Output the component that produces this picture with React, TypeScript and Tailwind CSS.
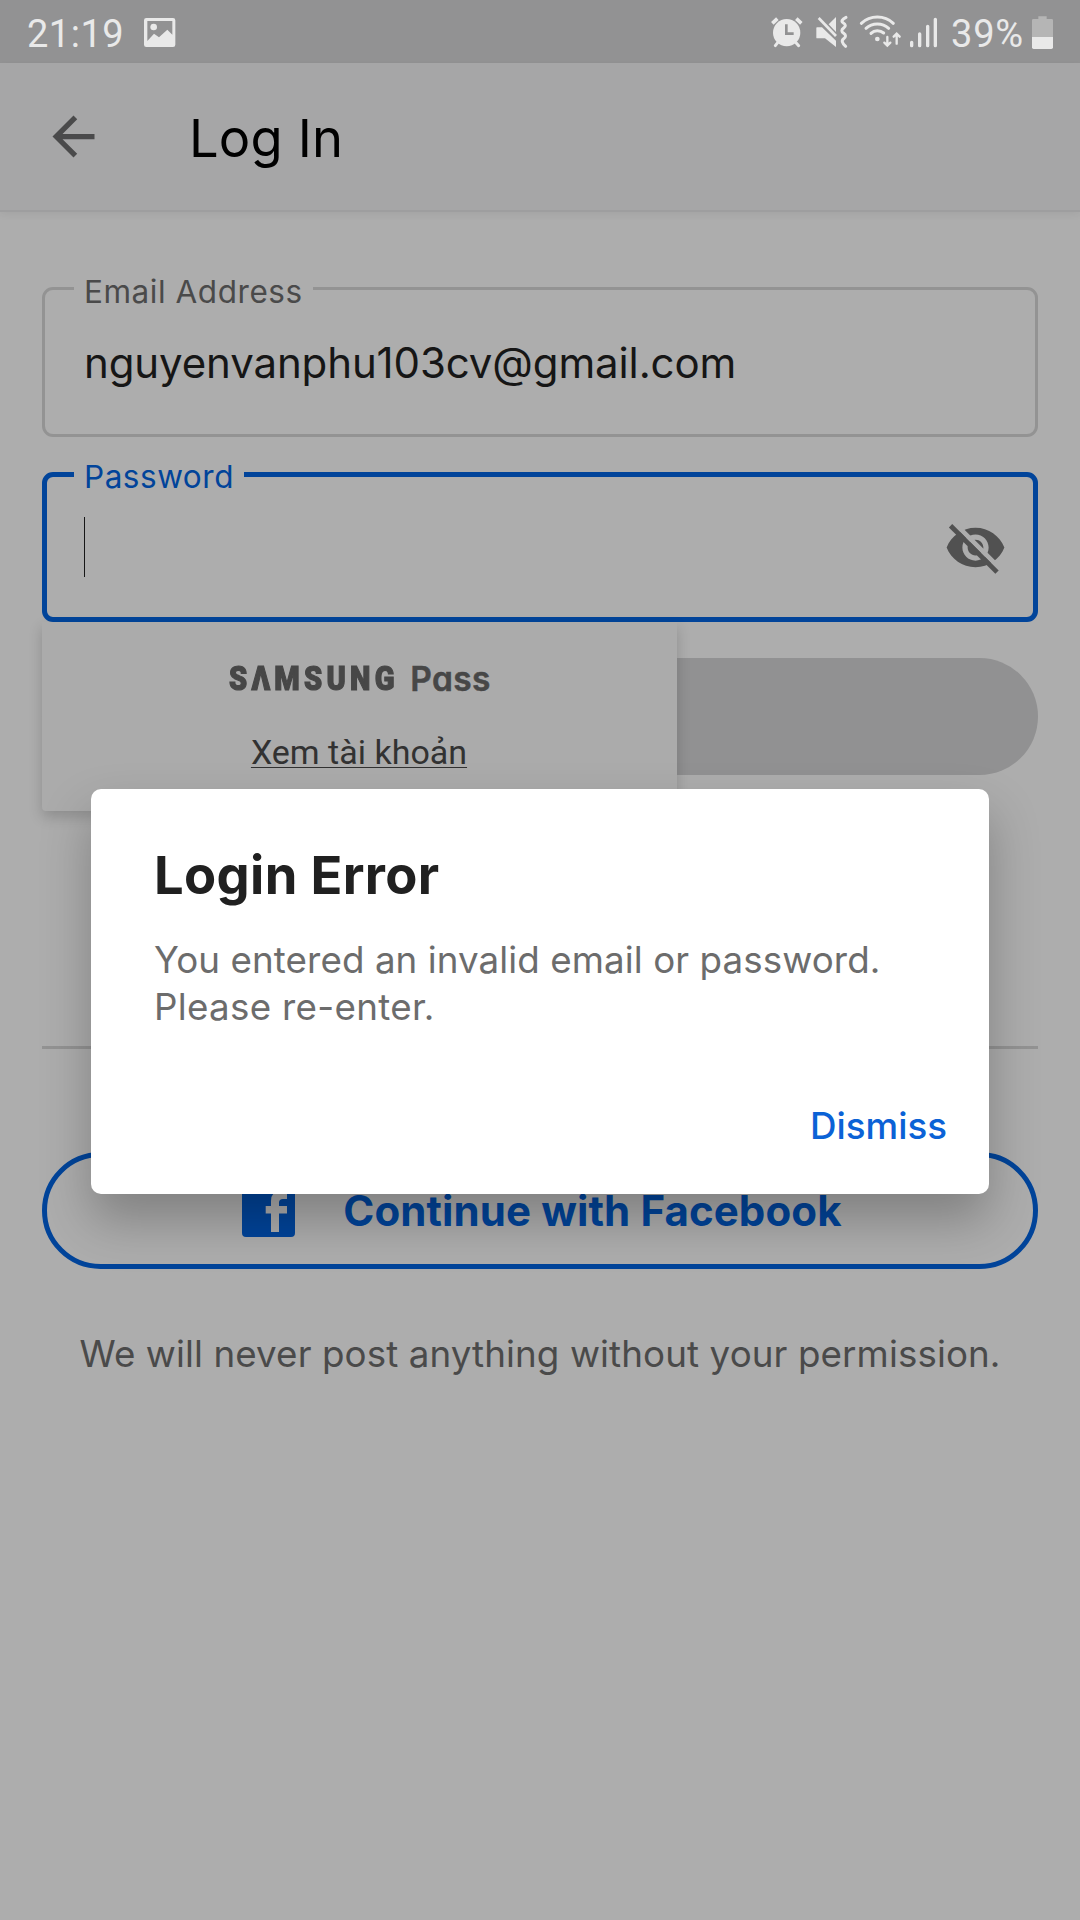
import React from "react";

function PictureIcon() {
  return (
    <svg width="34" height="31" viewBox="430 51 102 93" fill="#e9e9e9">
      <path
        fillRule="evenodd"
        d="M440 54H520Q527 54 527 61V134Q527 141 520 141H440Q433 141 433 134V61Q433 54 440 54ZM443 63V123L463 101L478 112L503 89L518 104V63Z"
      />
      <circle cx="462" cy="81" r="10" />
    </svg>
  );
}

function AlarmIcon() {
  return (
    <svg width="34" height="34" viewBox="90 45 102 102" fill="#e9e9e9" stroke="#e9e9e9" strokeLinecap="round">
      <circle cx="140" cy="98" r="41" stroke="none" />
      <path d="M97 70L112 56M184 70L169 56" strokeWidth="11" strokeLinecap="butt" />
      <path d="M113 128L106 137M168 128L176 137" strokeWidth="9" />
      <path d="M139 73V101H161" fill="none" stroke="#929293" strokeWidth="8" strokeLinecap="butt" />
    </svg>
  );
}

function MuteVibrateIcon() {
  return (
    <svg width="34" height="34" viewBox="225 45 102 102" fill="#e9e9e9">
      <path d="M231 82H246L288 122V141L255 115H231Q229 115 229 113V84Q229 82 231 82Z" />
      <path d="M288 51V96L266 73Z" />
      <path d="M236 54L288 108" stroke="#e9e9e9" strokeWidth="8" />
      <path
        d="M318 52Q300 61 309 68Q322 76 311 84Q300 92 311 100Q322 108 311 116Q300 124 317 139"
        fill="none"
        stroke="#e9e9e9"
        strokeWidth="9"
        strokeLinecap="round"
      />
    </svg>
  );
}

function WifiIcon() {
  return (
    <svg width="43" height="34" viewBox="357 45 129 102" fill="none" stroke="#e9e9e9" strokeWidth="9" strokeLinecap="round">
      <path d="M364 70Q384 51 412 51Q440 51 460 70" />
      <path d="M378 85Q392 72 412 72Q432 72 446 85" />
      <path d="M393 100Q401 92 412 92Q423 92 431 99" />
      <circle cx="412" cy="117" r="7" fill="#e9e9e9" stroke="none" />
      <path d="M442 111V135M433 128L442 137L451 128M470 131V103M461 110L470 101L479 110" strokeWidth="7" />
    </svg>
  );
}

function SignalIcon() {
  return (
    <svg width="30" height="34" viewBox="507 45 90 102" fill="none" stroke="#e9e9e9" strokeWidth="10" strokeLinecap="round">
      <path d="M515 127V137M539 102V137M563 79V137M586 58V137" />
    </svg>
  );
}

function BatteryIcon() {
  return (
    <svg width="23" height="35" viewBox="873 45 69 105">
      <path d="M895 49H920V57H935Q939 57 939 61V111H876V61Q876 57 880 57H895Z" fill="#b5b5b5" />
      <path d="M876 111H939V142Q939 147 934 147H881Q876 147 876 142Z" fill="#e9e9e9" />
    </svg>
  );
}

function BackIcon() {
  return (
    <svg width="63" height="63" viewBox="0 0 24 24" fill="#4a4a4b">
      <path d="M20 11H7.83l5.59-5.59L12 4l-8 8 8 8 1.41-1.41L7.83 13H20v-2z" />
    </svg>
  );
}

function EyeOffIcon() {
  return (
    <svg width="63" height="63" viewBox="0 0 24 24">
      <mask id="strike">
        <rect width="24" height="24" fill="#fff" />
        <path d="M2.2 .9L23.2 21.9" stroke="#000" strokeWidth="1.8" />
      </mask>
      <path
        mask="url(#strike)"
        fill="#515151"
        d="M12 4.5C7 4.5 2.73 7.61 1 12c1.73 4.39 6 7.5 11 7.5s9.27-3.11 11-7.5c-1.73-4.39-6-7.5-11-7.5zM12 17c-2.76 0-5-2.24-5-5s2.24-5 5-5 5 2.24 5 5-2.24 5-5 5zM12 9c-1.66 0-3 1.34-3 3s1.34 3 3 3 3-1.34 3-3-1.34-3-3-3z"
      />
      <path d="M2.5 3.7L20.2 21.4" stroke="#515151" strokeWidth="1.8" />
    </svg>
  );
}

function FacebookIcon() {
  return (
    <svg width="53" height="53" viewBox="0 0 53 53">
      <path
        fillRule="evenodd"
        fill="#01449a"
        d="M4 0H49Q53 0 53 4V49Q53 53 49 53H4Q0 53 0 49V4Q0 0 4 0ZM29 48H37V29.500H45V22H37V18.500Q37 15 41 15H45V7H39Q29 7 29 17V22H23.700V29.500H29Z"
      />
    </svg>
  );
}

function StatusBar() {
  return (
    <div className="flex h-[63px] items-start justify-between bg-[#929293] pl-[27px] pr-[26px] pt-[15px] font-[Roboto,sans-serif] text-[38px] leading-[38px] text-[#e9e9e9]">
      <div className="flex gap-[19px]">
        <span className="tracking-[0.5px]">21:19</span>
        <div className="pt-0.5">
          <PictureIcon />
        </div>
      </div>
      <div className="flex">
        <AlarmIcon />
        <div className="ml-[11px]">
          <MuteVibrateIcon />
        </div>
        <div className="ml-2.5">
          <WifiIcon />
        </div>
        <div className="ml-[7px]">
          <SignalIcon />
        </div>
        <span className="ml-3 w-20 tracking-[0.8px]">39%</span>
        <BatteryIcon />
      </div>
    </div>
  );
}

function LoginForm() {
  return (
    <main className="flex flex-col px-[42px] pt-[63px]">
      <fieldset className="h-[164px] min-w-0 rounded-[11px] border-[3px] border-[#939393] pl-[29px]">
        <legend className="h-[31px] px-2.5 text-[31.5px] leading-[38px] tracking-[0.54px] text-[#4a4a4a]">
          Email Address
        </legend>
        <div className="mt-[29px] pl-2.5 text-[42px] leading-[60px] tracking-[-0.12px] text-[#161616]">
          nguyenvanphu103cv@gmail.com
        </div>
      </fieldset>

      <div className="relative mt-[22px]">
        <fieldset className="h-[163px] min-w-0 rounded-[11px] border-[5px] border-[#01449a] pl-[27px] pr-[26px]">
          <legend className="h-[31px] px-2.5 text-[31.5px] leading-[36px] tracking-[0.52px] text-[#01449a]">
            Password
          </legend>
          <div className="mt-[27px] flex h-[60px] items-center justify-between pl-2.5">
            <div className="h-[60px] w-px bg-[#161616]" />
            <EyeOffIcon />
          </div>
        </fieldset>
        <div className="absolute left-0 top-full flex h-[189px] w-[635px] flex-col items-center rounded-b-[4px] bg-[#ababab] pt-[37px] shadow-[0_6px_14px_rgba(0,0,0,0.18)]">
          <div className="flex h-10 items-center gap-[17px] pl-px text-[#474747]">
            <span className="w-[164px] origin-left scale-x-[0.88] whitespace-nowrap font-[Roboto,sans-serif] text-[33px] font-black leading-10 tracking-[4.85px] [-webkit-text-stroke:1.2px_#474747]">
              SΛMSUNG
            </span>
            <span className="text-[33.5px] font-semibold leading-10 tracking-[0.3px] [-webkit-text-stroke:0.5px_#474747] [font-feature-settings:'cv11']">
              Pass
            </span>
          </div>
          <div className="mt-[31px] pr-px font-[Roboto,sans-serif] text-[34px] leading-[44px] text-[#323232] underline decoration-1 underline-offset-[3px]">
            Xem tài khoản
          </div>
        </div>
      </div>

      <div className="mt-9 h-[117px] rounded-full bg-[#919192]" />
      <div className="mt-[271px] h-[3px] bg-[#939393]" />

      <button className="mt-[103px] flex h-[117px] items-center justify-center gap-12 rounded-full border-[5px] border-[#01449a] pl-1 text-[42px] font-bold leading-[50px] tracking-[0.1px] text-[#01449a]">
        <FacebookIcon />
        Continue with Facebook
      </button>
      <p className="mt-[63px] whitespace-nowrap text-center text-[36.75px] leading-[44px] tracking-[0.1px] text-[#4a4a4a]">
        We will never post anything without your permission.
      </p>
    </main>
  );
}

function ErrorDialog() {
  return (
    <div className="absolute inset-x-0 bottom-0 top-[63px] flex items-center justify-center">
      <div
        role="alertdialog"
        className="h-[405px] w-[898px] rounded-[10px] bg-white pl-[63px] pr-[42px] pt-[55px] shadow-[0_26px_50px_rgba(0,0,0,0.26)]"
      >
        <h2 className="text-[52.5px] font-bold leading-[62px] tracking-[0.35px] text-[#202020]">Login Error</h2>
        <p className="mt-[30px] whitespace-nowrap text-[36.75px] leading-[47px] tracking-[0.08px] text-[#6c6c6c]">
          You entered an invalid email or password.
          <br />
          <span className="tracking-[0.3px]">Please re-enter.</span>
        </p>
        <div className="mt-[74px] text-right text-[36.75px] font-medium leading-[44px] text-[#0b62d6]">
          <button>Dismiss</button>
        </div>
      </div>
    </div>
  );
}

export default function App() {
  return (
    <div className="relative h-[1920px] w-[1080px] overflow-hidden bg-[#adadad] font-[Inter,sans-serif]">
      <StatusBar />
      <header className="flex h-[147px] items-center bg-[#a6a6a7] pl-[42px] shadow-[0_2px_0_#9e9e9f,0_4px_8px_rgba(0,0,0,0.06)]">
        <BackIcon />
        <h1 className="ml-[84px] pt-0.5 text-[52.5px] leading-[64px] tracking-[0.15px] text-black">Log In</h1>
      </header>
      <LoginForm />
      <ErrorDialog />
    </div>
  );
}
